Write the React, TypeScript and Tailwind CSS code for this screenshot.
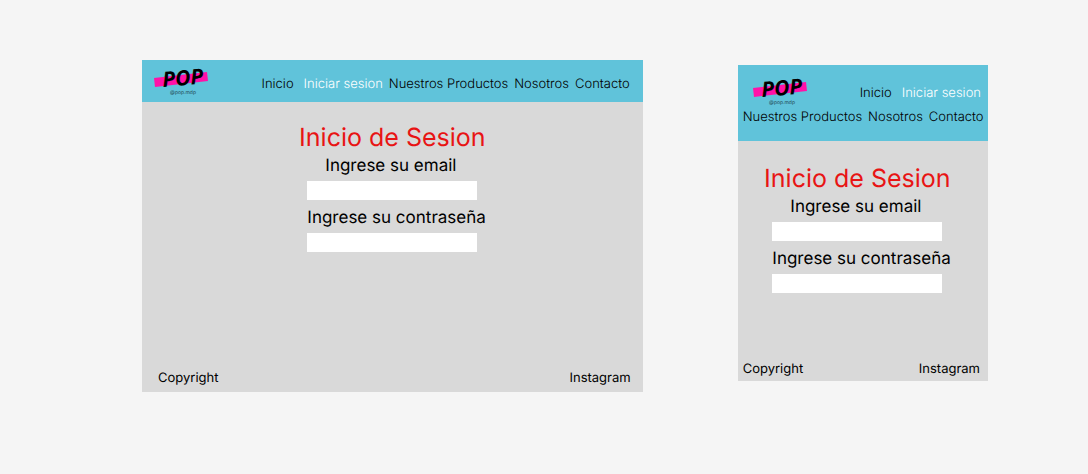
import { useId } from "react";

function Logo() {
  return (
    <svg viewBox="0 0 54 34" className="h-[34px] w-[54px] shrink-0 overflow-visible" role="img" aria-label="POP @pop.mdp">
      <polygon points="0,14 53,8 54,17 1,23" fill="#ff12a8" />
      <text
        x="9"
        y="23"
        fontSize="21"
        fontWeight="700"
        fontStyle="italic"
        fontFamily="'Open Sans', sans-serif"
        transform="rotate(-5 9 23)"
      >
        POP
      </text>
      <text
        x="29"
        y="30"
        fontSize="5"
        fontWeight="400"
        textAnchor="middle"
        fontFamily="Inter, sans-serif"
        fill="#1f4450"
      >
        @pop.mdp
      </text>
    </svg>
  );
}

function NavLink({ label, active = false }: { label: string; active?: boolean }) {
  return (
    <a href="#" aria-current={active ? "page" : undefined} className={active ? "text-white" : "text-black"}>
      {label}
    </a>
  );
}

function Field({ label, type, center = false }: { label: string; type: string; center?: boolean }) {
  const id = useId();
  return (
    <div className="flex w-[170px] flex-col gap-[3px]">
      <label
        htmlFor={id}
        className={`text-[17px] leading-6 whitespace-nowrap ${center ? "pl-[18px]" : ""}`}
      >
        {label}
      </label>
      <input id={id} type={type} className="h-[19px] w-full bg-white px-1 text-[13px] outline-none" />
    </div>
  );
}

function LoginForm() {
  return (
    <form className="flex flex-col items-center">
      <h1 className="text-[25px] leading-8 whitespace-nowrap text-[#e81414]">Inicio de Sesion</h1>
      <div className="flex flex-col gap-[6px]">
        <Field label="Ingrese su email" type="email" center />
        <Field label="Ingrese su contraseña" type="password" />
      </div>
    </form>
  );
}

export default function App() {
  return (
    <div className="flex min-h-screen items-start gap-[95px] bg-[#f5f5f5] pt-[60px] pr-[100px] pb-12 pl-[142px] font-['Inter',sans-serif] text-[13px] leading-4 text-black [text-rendering:geometricPrecision]">
      <section className="flex min-h-[332px] min-w-0 flex-2 flex-col bg-[#d9d9d9]">
        <header className="flex h-[42px] items-center justify-between bg-[#60c3da] pr-[13px] pl-3">
          <Logo />
          <nav className="flex items-center gap-[6px] pt-[6px] font-light whitespace-nowrap">
            <span className="pr-1">
              <NavLink label="Inicio" />
            </span>
            <NavLink label="Iniciar sesion" active />
            <NavLink label="Nuestros Productos" />
            <NavLink label="Nosotros" />
            <NavLink label="Contacto" />
          </nav>
        </header>
        <main className="flex flex-1 justify-center pt-5">
          <LoginForm />
        </main>
        <footer className="flex justify-between pr-3 pb-[6px] pl-4">
          <span>Copyright</span>
          <a href="#">Instagram</a>
        </footer>
      </section>

      <section className="mt-[5px] flex min-h-[316px] min-w-0 flex-1 flex-col bg-[#d9d9d9]">
        <header className="flex h-[76px] flex-col bg-[#60c3da] px-[5px] pt-[9px] font-light whitespace-nowrap">
          <div className="flex justify-between pl-[10px]">
            <Logo />
            <nav className="flex gap-[10px] pt-[11px] pr-[2px]">
              <NavLink label="Inicio" />
              <NavLink label="Iniciar sesion" active />
            </nav>
          </div>
          <nav className="flex gap-[6px] pt-px">
            <NavLink label="Nuestros Productos" />
            <NavLink label="Nosotros" />
            <NavLink label="Contacto" />
          </nav>
        </header>
        <main className="flex flex-1 justify-center pt-[22px] pr-[11px]">
          <LoginForm />
        </main>
        <footer className="flex justify-between pr-2 pb-1 pl-[5px]">
          <span>Copyright</span>
          <a href="#">Instagram</a>
        </footer>
      </section>
    </div>
  );
}
